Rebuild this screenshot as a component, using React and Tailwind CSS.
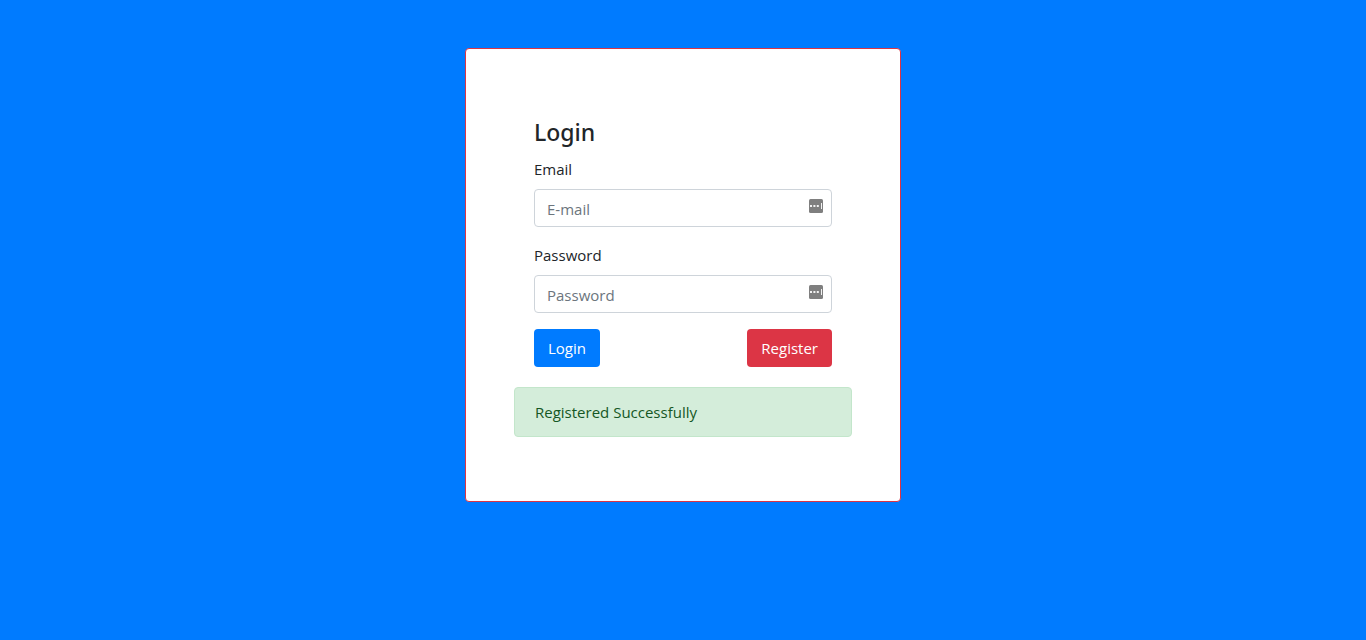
function FillIcon() {
  return (
    <svg
      className="pointer-events-none absolute top-2.5 right-[9px] size-3.5"
      viewBox="0 0 14 14"
      aria-hidden="true"
    >
      <rect width="14" height="14" rx="1.5" fill="#7f7f7f" />
      <rect x="1" y="6" width="2" height="2" fill="#fff" opacity="0.9" />
      <rect x="4.4" y="6" width="2" height="2" fill="#fff" opacity="0.9" />
      <rect x="7.8" y="6" width="2" height="2" fill="#fff" opacity="0.9" />
      <rect x="12" y="4" width="1" height="6" fill="#fff" opacity="0.9" />
    </svg>
  );
}

function Field({ id, label, type, placeholder }) {
  return (
    <div className="mb-4">
      <label htmlFor={id} className="mb-2 block">
        {label}
      </label>
      <div className="relative">
        <input
          id={id}
          type={type}
          placeholder={placeholder}
          className="block h-[38px] w-full rounded border border-[#ced4da] bg-white px-3 pt-0.5 pr-8 text-[#495057] outline-none placeholder:text-[#6c757d] focus:border-[#80bdff]"
        />
        <FillIcon />
      </div>
    </div>
  );
}

export default function App() {
  return (
    <main className="min-h-screen bg-[#007bff] px-4 py-12 font-['Open_Sans','Noto_Sans',sans-serif] text-[15px] leading-6 text-[#212529]">
      <div className="mx-auto w-full max-w-[436px] rounded border border-[#dc3545] bg-white p-12">
        <form className="p-5" onSubmit={(e) => e.preventDefault()}>
          <h1 className="mb-2.5 font-['Noto_Sans','Open_Sans',sans-serif] text-[23px] leading-[30px] font-medium">
            Login
          </h1>
          <Field id="email" label="Email" type="email" placeholder="E-mail" />
          <Field id="password" label="Password" type="password" placeholder="Password" />
          <div className="flex justify-between">
            <button type="submit" className="h-[38px] rounded bg-[#007bff] px-3.5 text-white">
              Login
            </button>
            <button type="button" className="h-[38px] rounded bg-[#dc3545] px-3.5 text-white">
              Register
            </button>
          </div>
        </form>
        <div role="alert" className="mb-4 rounded border border-[#c3e6cb] bg-[#d4edda] px-5 py-3 text-[#155724]">
          Registered Successfully
        </div>
      </div>
    </main>
  );
}
